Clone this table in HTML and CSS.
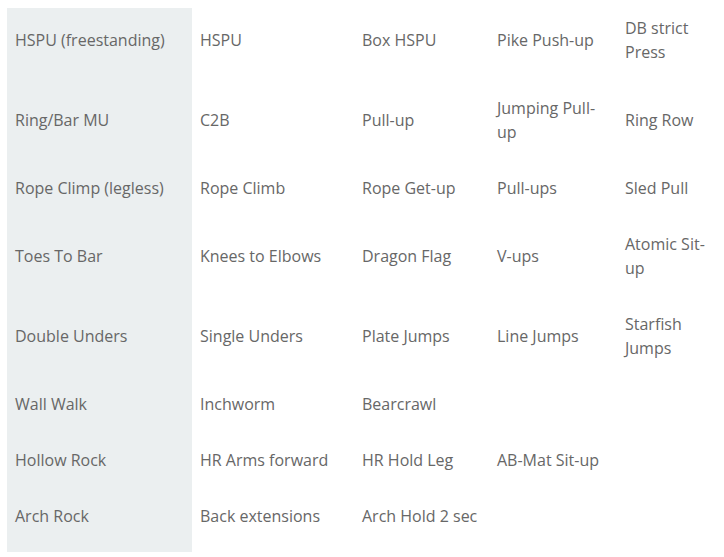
FILE: index.html
```html
<!DOCTYPE html>
<html lang="en">
<head>
<meta charset="utf-8">
<title>Movements</title>
<link rel="stylesheet" href="styles.css">
</head>
<body>
<div class="wrap">
<table class="moves">
<colgroup>
<col class="c1"><col class="c2"><col class="c3"><col class="c4"><col class="c5">
</colgroup>
<tbody>
<tr><td class="main">HSPU (freestanding)</td><td>HSPU</td><td>Box HSPU</td><td>Pike Push-up</td><td>DB strict Press</td></tr>
<tr><td class="main">Ring/Bar MU</td><td>C2B</td><td>Pull-up</td><td>Jumping Pull-up</td><td>Ring Row</td></tr>
<tr><td class="main">Rope Climp (legless)</td><td>Rope Climb</td><td>Rope Get-up</td><td>Pull-ups</td><td>Sled Pull</td></tr>
<tr><td class="main">Toes To Bar</td><td>Knees to Elbows</td><td>Dragon Flag</td><td>V-ups</td><td>Atomic Sit-up</td></tr>
<tr><td class="main">Double Unders</td><td>Single Unders</td><td>Plate Jumps</td><td>Line Jumps</td><td>Starfish Jumps</td></tr>
<tr><td class="main">Wall Walk</td><td>Inchworm</td><td>Bearcrawl</td><td></td><td></td></tr>
<tr><td class="main">Hollow Rock</td><td>HR Arms forward</td><td>HR Hold Leg</td><td>AB-Mat Sit-up</td><td></td></tr>
<tr><td class="main">Arch Rock</td><td>Back extensions</td><td>Arch Hold 2 sec</td><td></td><td></td></tr>
</tbody>
</table>
</div>
</body>
</html>
```
FILE: styles.css
```css
html, body {
  margin: 0;
  padding: 0;
  background: #ffffff;
}
.wrap {
  padding: 8px 7px;
}
.moves {
  width: 710px;
  table-layout: fixed;
  border-collapse: collapse;
  font-family: "Open Sans", "Noto Sans", sans-serif;
  font-size: 16px;
  line-height: 24px;
  color: #676767;
}
.c1 { width: 185px; }
.c2 { width: 162px; }
.c3 { width: 135px; }
.c4 { width: 128px; }
.c5 { width: 100px; }
.moves td {
  padding: 8px 8px 24px 8px;
  vertical-align: middle;
  text-align: left;
}
.moves td.main {
  background: #ebeff0;
}
```
